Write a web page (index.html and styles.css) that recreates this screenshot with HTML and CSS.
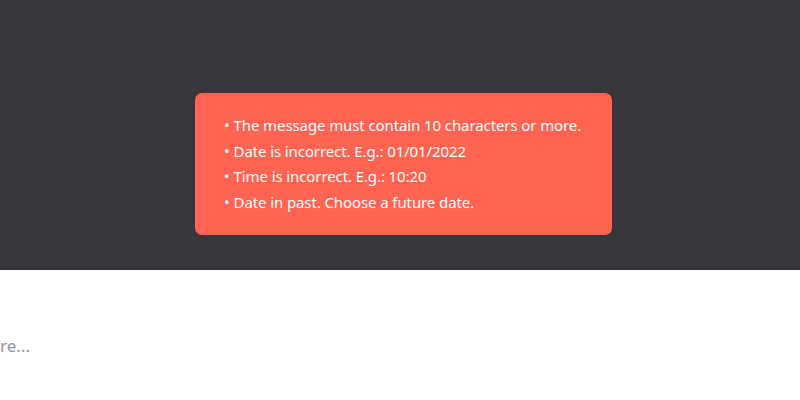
FILE: index.html
```html
<!DOCTYPE html>
<html>
<head>
<meta charset="utf-8">
<link rel="stylesheet" href="styles.css">
</head>
<body>
<div class="overlay">
  <div class="alert">
    <ul class="errors">
      <li>The message must contain 10 characters or more.</li>
      <li>Date is incorrect. E.g.: 01/01/2022</li>
      <li>Time is incorrect. E.g.: 10:20</li>
      <li>Date in past. Choose a future date.</li>
    </ul>
  </div>
</div>
<div class="below">
  <p class="placeholder">re...</p>
</div>
</body>
</html>
```
FILE: styles.css
```css
html, body {
  margin: 0;
  padding: 0;
  background: #ffffff;
}
body {
  font-family: "Noto Sans", "Open Sans", sans-serif;
}
.overlay {
  height: 270px;
  background: #38363b;
  display: flex;
  justify-content: center;
  align-items: flex-start;
  padding-top: 93px;
  box-sizing: border-box;
}
.alert {
  width: 417px;
  height: 142px;
  box-sizing: border-box;
  margin-left: 7px;
  background: #ff6352;
  border-radius: 7px;
  padding: 20px 0 0 29px;
  color: #ffffff;
}
.errors {
  list-style: none;
  margin: 0;
  padding: 0;
  font-size: 15px;
  line-height: 25.5px;
  letter-spacing: -0.1px;
}
.errors li::before {
  content: "\2022";
  margin-right: 4px;
}
.below {
  padding-top: 64px;
}
.placeholder {
  margin: 0;
  font-size: 17px;
  color: #92979d;
}
```
